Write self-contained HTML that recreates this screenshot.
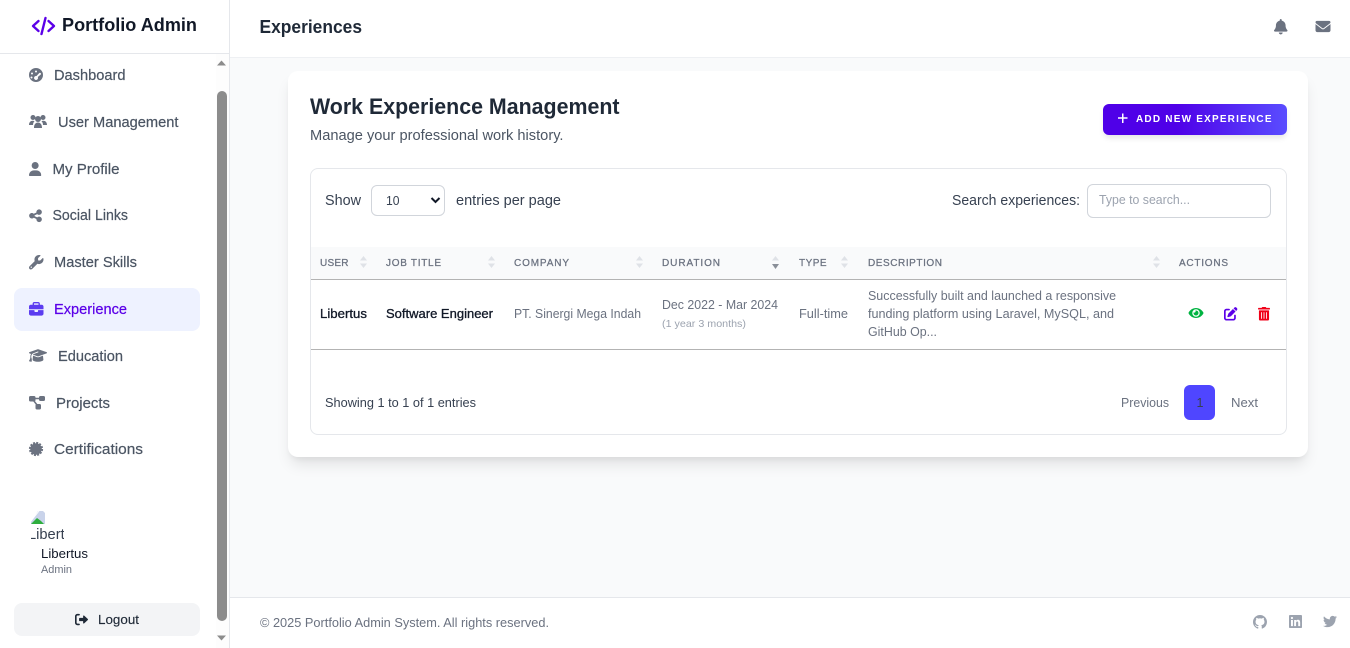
<!DOCTYPE html>
<html lang="en"><head><meta charset="utf-8"><title>Experiences</title>
<style>
html,body{margin:0;padding:0;width:1350px;height:648px;overflow:hidden;background:#f9fafb}
body{position:relative;font-family:"Liberation Sans",sans-serif}
.b{position:absolute;box-sizing:border-box}
svg.o{position:absolute;left:0;top:0}
text{font-family:"Liberation Sans",sans-serif}
.nav{font-size:14.5px;fill:#4b5563;stroke:#4b5563;stroke-width:.2}
.th{font-size:10px;fill:#6b7280;stroke:#6b7280;stroke-width:.25}
.td{font-size:12.5px;fill:#6b7280}
.gi{fill:#6b7280}
.s{fill:#dfe2e7}
</style></head><body>
<div class="b" style="left:0;top:0;width:230px;height:648px;background:#fff;border-right:1px solid #e5e7eb"></div>
<div class="b" style="left:0;top:53px;width:229px;height:1px;background:#e5e7eb"></div>
<div class="b" style="left:230px;top:0;width:1120px;height:58px;background:#fff;border-bottom:1px solid #eef0f3"></div>
<div class="b" style="left:230px;top:597px;width:1120px;height:51px;background:#fff;border-top:1px solid #e5e7eb"></div>
<div class="b" style="left:216px;top:54px;width:13px;height:594px;background:#fdfdfd"></div>
<div class="b" style="left:217px;top:91px;width:9.500px;height:530px;background:#8c8c8c;border-radius:5px"></div>
<div class="b" style="left:14px;top:288px;width:186px;height:43px;background:#eef2ff;border-radius:8px"></div>
<div class="b" style="left:14px;top:603px;width:186px;height:33px;background:#f3f4f6;border-radius:8px"></div>
<div class="b" style="left:288px;top:71px;width:1020px;height:386px;background:#fff;border-radius:10px;box-shadow:0 10px 15px -3px rgba(0,0,0,.1),0 4px 6px -2px rgba(0,0,0,.05)"></div>
<div class="b" style="left:1103px;top:104px;width:184px;height:31px;border-radius:6px;background:linear-gradient(90deg,#4f00e8 0%,#4f00e8 40%,#5a4dff 100%);box-shadow:0 4px 6px -1px rgba(0,0,0,.1)"></div>
<div class="b" style="left:310px;top:168px;width:977px;height:267px;border:1px solid #e5e7eb;border-radius:8px;background:#fff"></div>
<div class="b" style="left:371px;top:185px;width:74px;height:31px;border:1px solid #d1d5db;border-radius:6px;background:#fff"></div>
<div class="b" style="left:1087px;top:184px;width:184px;height:34px;border:1px solid #d1d5db;border-radius:6px;background:#fff"></div>
<div class="b" style="left:311px;top:247px;width:975px;height:33px;background:#f9fafb;border-bottom:1px solid #b3b3b3"></div>
<div class="b" style="left:311px;top:349px;width:975px;height:1px;background:#b3b3b3"></div>
<div class="b" style="left:1184px;top:385px;width:31px;height:35px;background:#4f46ff;border-radius:6px"></div>

<svg class="o" width="1350" height="648" viewBox="0 0 1350 648" xmlns="http://www.w3.org/2000/svg">
<!-- logo -->
<g fill="none" stroke="#5b00e8" stroke-width="2.4" stroke-linecap="round" stroke-linejoin="round"><path d="M38.500 21 33 26l5.500 5M48.500 21l5.500 5-5.500 5"/><path d="M45.500 18 41.500 34"/></g>
<text x="62" y="31" font-size="18" font-weight="700" fill="#111827" textLength="135" lengthAdjust="spacingAndGlyphs">Portfolio Admin</text>
<text x="259.500" y="33" font-size="18" font-weight="700" fill="#1f2937" textLength="102.500" lengthAdjust="spacingAndGlyphs">Experiences</text>

<!-- scroll arrows -->
<path d="M217 65.500 221.500 60.500 226 65.500z" fill="#8c8c8c"/><path d="M217 635.500 221.500 640.500 226 635.500z" fill="#8c8c8c"/>

<!-- nav icons -->
<path class="gi" fill-rule="evenodd" d="M36 68a7 7 0 1 0 0 14 7 7 0 0 0 0-14zM36 70.500a1 1 0 1 1 0 2 1 1 0 0 1 0-2zM32 72.500a1 1 0 1 1 0 2 1 1 0 0 1 0-2zM40.500 73a1 1 0 0 1 .4 1.400L37.800 77a2 2 0 1 1-1.300-1l2.800-3a1 1 0 0 1 1.200 0zM31.500 76.500a1 1 0 1 1 0 2 1 1 0 0 1 0-2z"/>
<g class="gi"><circle cx="33" cy="117.500" r="2.500"/><circle cx="43" cy="117.500" r="2.500"/><circle cx="38" cy="119" r="3"/><path d="M29 125c0-2.500 1.500-4.200 3.700-4.200.7 0 1.300.2 1.800.5-1 1-1.500 2.200-1.500 3.700H29zM47 125c0-2.500-1.500-4.200-3.700-4.200-.7 0-1.300.2-1.800.5 1 1 1.500 2.200 1.500 3.700H47zM34 128c0-3.500 1.500-5.500 4-5.500s4 2 4 5.500z"/></g>
<svg x="29" y="162" width="12.300" height="14" viewBox="0 0 448 512" class="gi"><path d="M224 256A128 128 0 1 0 224 0a128 128 0 1 0 0 256zm-45.700 48C79.800 304 0 383.800 0 482.300C0 498.700 13.300 512 29.700 512H418.300c16.400 0 29.700-13.300 29.700-29.700C448 383.800 368.200 304 269.700 304H178.300z"/></svg>
<svg x="29" y="208.500" width="13" height="14.500" viewBox="0 0 448 512" class="gi"><path d="M352 224c53 0 96-43 96-96s-43-96-96-96s-96 43-96 96c0 4 .2 8 .7 11.900l-94.100 47C145.400 170.200 121.900 160 96 160c-53 0-96 43-96 96s43 96 96 96c25.900 0 49.400-10.200 66.600-26.900l94.100 47c-.5 3.900-.7 7.800-.7 11.900c0 53 43 96 96 96s96-43 96-96s-43-96-96-96c-25.900 0-49.400 10.200-66.600 26.900l-94.100-47c.5-3.900 .7-7.800 .7-11.900s-.2-8-.7-11.900l94.100-47C302.600 213.800 326.100 224 352 224z"/></svg>
<svg x="29" y="255" width="14.500" height="14.500" viewBox="0 0 512 512" class="gi"><path d="M352 320c88.400 0 160-71.600 160-160c0-15.300-2.200-30.100-6.200-44.200c-3.100-10.800-16.400-13.200-24.300-5.300l-76.800 76.800c-3 3-7.100 4.700-11.300 4.700H336c-8.800 0-16-7.200-16-16V118.600c0-4.200 1.700-8.300 4.700-11.300l76.800-76.800c7.900-7.900 5.400-21.200-5.300-24.300C382.100 2.200 367.300 0 352 0C263.600 0 192 71.600 192 160c0 19.100 3.400 37.500 9.500 54.500L19.900 396.100C7.200 408.800 0 426.100 0 444.100C0 481.600 30.400 512 67.900 512c18 0 35.300-7.200 48-19.900L297.500 310.500c17 6.200 35.400 9.500 54.500 9.500zM80 408a24 24 0 1 1 0 48 24 24 0 1 1 0-48z"/></svg>
<svg x="29" y="302" width="14.500" height="14.500" viewBox="0 0 512 512" fill="#5b3cf0"><path d="M184 48H328c4.400 0 8 3.600 8 8V96H176V56c0-4.400 3.600-8 8-8zm-56 8V96H64C28.700 96 0 124.700 0 160v96H192 320 512V160c0-35.300-28.700-64-64-64H384V56c0-30.900-25.100-56-56-56H184c-30.900 0-56 25.100-56 56zM512 288H320v32c0 17.700-14.300 32-32 32H224c-17.700 0-32-14.300-32-32V288H0V416c0 35.300 28.700 64 64 64H448c35.300 0 64-28.700 64-64V288z"/></svg>
<svg x="29" y="348" width="18" height="15" viewBox="0 0 640 512" class="gi"><path d="M320 32c-8.100 0-16.100 1.400-23.700 4.100L15.800 137.400C6.300 140.900 0 149.900 0 160s6.300 19.100 15.800 22.600l57.900 20.900C57.300 229.300 48 259.800 48 291.900v28.100c0 28.400-10.800 57.700-22.300 80.800c-6.500 13-13.900 25.800-22.500 37.600C0 442.700-.9 448.300 .9 453.400s6 8.900 11.200 10.200l64 16c4.200 1.100 8.700 .3 12.400-2s6.300-6.100 7.100-10.400c8.600-42.800 4.300-81.200-2.100-108.700C90.300 344.300 86 329.800 80 316.500V291.900c0-30.200 10.200-58.700 27.900-81.500c12.900-15.500 29.600-28 49.200-35.700l157-61.700c8.200-3.200 17.500 .8 20.700 9s-.8 17.500-9 20.700l-157 61.700c-12.400 4.900-23.300 12.400-32.200 21.600l159.600 57.600c7.600 2.700 15.600 4.100 23.700 4.100s16.100-1.400 23.700-4.100L624.200 182.600c9.500-3.400 15.800-12.500 15.800-22.600s-6.300-19.100-15.800-22.600L343.700 36.100C336.100 33.400 328.100 32 320 32zM128 408c0 35.300 86 72 192 72s192-36.700 192-72L496.700 262.600 354.500 314c-11.100 4-22.800 6-34.500 6s-23.500-2-34.500-6L143.300 262.600 128 408z"/></svg>
<g class="gi"><rect x="29" y="396" width="6.500" height="5.500" rx="1.500"/><rect x="39" y="396" width="6" height="5" rx="1.500"/><rect x="35.500" y="404" width="5.500" height="5.500" rx="1.500"/></g>
<path d="M34 398.500h6M33.500 400.500l4 5" stroke="#6b7280" stroke-width="1.500" fill="none"/>
<circle class="gi" cx="36" cy="449" r="5.800"/>
<circle cx="36" cy="449" r="6.200" fill="none" stroke="#6b7280" stroke-width="1.800" stroke-dasharray="1.950 1.300"/>

<!-- nav text -->
<text class="nav" x="54" y="80" textLength="71.500" lengthAdjust="spacingAndGlyphs">Dashboard</text>
<text class="nav" x="58" y="127" textLength="120.500" lengthAdjust="spacingAndGlyphs">User Management</text>
<text class="nav" x="52.500" y="174" textLength="67" lengthAdjust="spacingAndGlyphs">My Profile</text>
<text class="nav" x="52.500" y="220" textLength="75.500" lengthAdjust="spacingAndGlyphs">Social Links</text>
<text class="nav" x="54" y="267" textLength="83" lengthAdjust="spacingAndGlyphs">Master Skills</text>
<text class="nav" x="54" y="314" textLength="73" lengthAdjust="spacingAndGlyphs" style="fill:#5b00e8;stroke:#5b00e8">Experience</text>
<text class="nav" x="58" y="361" textLength="65" lengthAdjust="spacingAndGlyphs">Education</text>
<text class="nav" x="56" y="408" textLength="54" lengthAdjust="spacingAndGlyphs">Projects</text>
<text class="nav" x="54" y="454" textLength="89" lengthAdjust="spacingAndGlyphs">Certifications</text>

<!-- avatar broken image -->
<path d="M38 511h5l2 2v11H31v-2z" fill="#c9d3ea"/><path d="M31 524l6-6 4 3 3 3z" fill="#2eae3e"/><path d="M31 521l8-10" stroke="#fff" stroke-width="1"/>
<svg x="31" y="524" width="33" height="19" viewBox="0 0 33 19"><text x="-3" y="15" font-size="14.500" fill="#374151" textLength="44" lengthAdjust="spacingAndGlyphs">Liberty</text></svg>
<text x="41" y="558" font-size="13" fill="#111827" textLength="47" lengthAdjust="spacingAndGlyphs">Libertus</text>
<text x="41" y="573" font-size="11" fill="#6b7280" textLength="31" lengthAdjust="spacingAndGlyphs">Admin</text>

<svg x="75" y="613" width="13" height="13" viewBox="0 0 512 512" fill="#1f2937"><path d="M160 96c17.700 0 32-14.300 32-32s-14.300-32-32-32H96C43 32 0 75 0 128V384c0 53 43 96 96 96h64c17.700 0 32-14.300 32-32s-14.300-32-32-32H96c-17.700 0-32-14.300-32-32l0-256c0-17.700 14.300-32 32-32h64zM504.500 273.400c4.800-4.500 7.500-10.800 7.500-17.400s-2.700-12.900-7.500-17.400l-144-136c-7-6.600-17.200-8.400-26-4.600s-14.500 12.500-14.500 22v72H192c-17.700 0-32 14.300-32 32l0 64c0 17.700 14.300 32 32 32H320v72c0 9.600 5.700 18.200 14.500 22s19 2 26-4.600l144-136z"/></svg>
<text x="98" y="624" font-size="13" fill="#1f2937" stroke="#1f2937" stroke-width=".15" textLength="41" lengthAdjust="spacingAndGlyphs">Logout</text>

<!-- header icons -->
<svg x="1274" y="19" width="13.500" height="15.500" viewBox="0 0 448 512" class="gi"><path d="M224 0c-17.700 0-32 14.300-32 32V51.200C119 66 64 130.600 64 208v18.800c0 47-17.300 92.400-48.500 127.600l-7.400 8.300c-8.400 9.400-10.400 22.900-5.300 34.400S19.400 416 32 416H416c12.600 0 24-7.400 29.200-18.900s3.100-25-5.300-34.400l-7.400-8.300C401.300 319.200 384 273.900 384 226.800V208c0-77.400-55-142-128-156.800V32c0-17.700-14.300-32-32-32zm45.300 493.300c12-12 18.700-28.300 18.700-45.300H224 160c0 17 6.700 33.300 18.700 45.300s28.300 18.700 45.300 18.700s33.300-6.700 45.300-18.700z"/></svg>
<svg x="1315.500" y="19" width="15" height="15" viewBox="0 0 512 512" class="gi"><path d="M48 64C21.500 64 0 85.500 0 112c0 15.100 7.100 29.300 19.200 38.400L236.800 313.600c11.400 8.500 27 8.500 38.400 0L492.800 150.400c12.100-9.100 19.200-23.300 19.200-38.400c0-26.500-21.500-48-48-48H48zM0 176V384c0 35.300 28.700 64 64 64H448c35.300 0 64-28.700 64-64V176L294.400 339.200c-22.800 17.100-54 17.100-76.800 0L0 176z"/></svg>

<!-- card head -->
<text x="310" y="114" font-size="22" font-weight="700" fill="#1f2937" textLength="309.500" lengthAdjust="spacingAndGlyphs">Work Experience Management</text>
<text x="310" y="140" font-size="14.500" fill="#4b5563" textLength="253.500" lengthAdjust="spacingAndGlyphs">Manage your professional work history.</text>
<path d="M1118 118h9.500M1122.750 113.500v9.500" stroke="#fff" stroke-width="1.500" fill="none"/>
<text x="1136" y="122" font-size="10" font-weight="700" fill="#fff" textLength="135.500">ADD NEW EXPERIENCE</text>

<!-- controls -->
<text x="325" y="205" font-size="14.500" fill="#374151" textLength="36" lengthAdjust="spacingAndGlyphs">Show</text>
<text x="386" y="205" font-size="12.500" fill="#374151" textLength="13.500" lengthAdjust="spacingAndGlyphs">10</text>
<path d="M431.500 198l4 4 4-4" stroke="#111827" stroke-width="2" fill="none"/>
<text x="456" y="205" font-size="14.500" fill="#374151" textLength="105" lengthAdjust="spacingAndGlyphs">entries per page</text>
<text x="952" y="205" font-size="14.500" fill="#374151" textLength="128" lengthAdjust="spacingAndGlyphs">Search experiences:</text>
<text x="1099" y="204" font-size="12.500" fill="#9ca3af" textLength="91" lengthAdjust="spacingAndGlyphs">Type to search...</text>

<!-- table head -->
<text class="th" x="320" y="266" textLength="28.500">USER</text>
<text class="th" x="386" y="266" textLength="55">JOB TITLE</text>
<text class="th" x="514" y="266" textLength="55">COMPANY</text>
<text class="th" x="662" y="266" textLength="58">DURATION</text>
<text class="th" x="799" y="266" textLength="27.500">TYPE</text>
<text class="th" x="868" y="266" textLength="74">DESCRIPTION</text>
<text class="th" x="1179" y="266" textLength="49">ACTIONS</text>
<g class="s">
<path d="M360 260.500l3.500-4.500 3.500 4.500zM360 263.500l3.500 4.500 3.500-4.500z"/>
<path d="M488 260.500l3.500-4.500 3.500 4.500zM488 263.500l3.500 4.500 3.500-4.500z"/>
<path d="M636 260.500l3.500-4.500 3.500 4.500zM636 263.500l3.500 4.500 3.500-4.500z"/>
<path d="M772 260.500l3.500-4.500 3.500 4.500z"/>
<path d="M841 260.500l3.500-4.500 3.500 4.500zM841 263.500l3.500 4.500 3.500-4.500z"/>
<path d="M1153 260.500l3.500-4.500 3.500 4.500zM1153 263.500l3.500 4.500 3.500-4.500z"/>
</g>
<path d="M772 264l3.500 5 3.500-5z" fill="#8a8f98"/>

<!-- row -->
<text x="320" y="318" font-size="12.500" fill="#111827" stroke="#111827" stroke-width=".3" textLength="47" lengthAdjust="spacingAndGlyphs">Libertus</text>
<text x="386" y="318" font-size="12.500" fill="#111827" stroke="#111827" stroke-width=".3" textLength="107" lengthAdjust="spacingAndGlyphs">Software Engineer</text>
<text class="td" x="514" y="318" textLength="127" lengthAdjust="spacingAndGlyphs">PT. Sinergi Mega Indah</text>
<text class="td" x="662" y="309" textLength="116" lengthAdjust="spacingAndGlyphs">Dec 2022 - Mar 2024</text>
<text x="662" y="327" font-size="10.500" fill="#9ca3af" textLength="84" lengthAdjust="spacingAndGlyphs">(1 year 3 months)</text>
<text class="td" x="799" y="318" textLength="49" lengthAdjust="spacingAndGlyphs">Full-time</text>
<text class="td" x="868" y="300" textLength="248" lengthAdjust="spacingAndGlyphs">Successfully built and launched a responsive</text>
<text class="td" x="868" y="318" textLength="246" lengthAdjust="spacingAndGlyphs">funding platform using Laravel, MySQL, and</text>
<text class="td" x="868" y="336" textLength="69" lengthAdjust="spacingAndGlyphs">GitHub Op...</text>

<svg x="1188.500" y="305.500" width="15" height="15" viewBox="0 0 576 512" fill="#00b341"><path d="M572.520 241.400C518.290 135.590 410.930 64 288 64S57.680 135.640 3.480 241.410a32.350 32.350 0 0 0 0 29.190C57.710 376.410 165.070 448 288 448s230.320-71.640 284.520-177.410a32.350 32.350 0 0 0 0-29.190zM288 400a144 144 0 1 1 144-144 143.930 143.930 0 0 1-144 144zm0-240a95.310 95.310 0 0 0-25.310 3.790 47.850 47.850 0 0 1-66.900 66.900A95.780 95.780 0 1 0 288 160z"/></svg>
<svg x="1224" y="307" width="13.500" height="13.500" viewBox="0 0 512 512" fill="#5b00e8"><path d="M471.600 21.700c-21.900-21.900-57.300-21.900-79.200 0L362.300 51.700l97.900 97.900 30.100-30.100c21.900-21.900 21.900-57.300 0-79.200L471.600 21.700zm-299.200 220c-6.100 6.100-10.800 13.600-13.500 21.900l-29.600 88.800c-2.900 8.600-.6 18.100 5.800 24.600s15.900 8.700 24.600 5.800l88.800-29.600c8.200-2.700 15.700-7.400 21.900-13.500L437.700 172.300 339.700 74.300 172.400 241.700zM96 64C43 64 0 107 0 160V416c0 53 43 96 96 96H352c53 0 96-43 96-96V320c0-17.700-14.300-32-32-32s-32 14.300-32 32v96c0 17.700-14.300 32-32 32H96c-17.700 0-32-14.300-32-32V160c0-17.700 14.300-32 32-32h96c17.700 0 32-14.300 32-32s-14.300-32-32-32H96z"/></svg>
<svg x="1258" y="307" width="12" height="13.500" viewBox="0 0 448 512" fill="#f00018"><path d="M32 464a48 48 0 0 0 48 48h288a48 48 0 0 0 48-48V128H32zm272-256a16 16 0 0 1 32 0v224a16 16 0 0 1-32 0zm-96 0a16 16 0 0 1 32 0v224a16 16 0 0 1-32 0zm-96 0a16 16 0 0 1 32 0v224a16 16 0 0 1-32 0zM432 32H312l-9.400-18.700A24 24 0 0 0 281.100 0H166.800a23.720 23.720 0 0 0-21.400 13.300L136 32H16A16 16 0 0 0 0 48v32a16 16 0 0 0 16 16h416a16 16 0 0 0 16-16V48a16 16 0 0 0-16-16z"/></svg>

<!-- pagination -->
<text x="325" y="407" font-size="12.500" fill="#374151" textLength="151" lengthAdjust="spacingAndGlyphs">Showing 1 to 1 of 1 entries</text>
<text class="td" x="1121" y="407" textLength="48" lengthAdjust="spacingAndGlyphs">Previous</text>
<text x="1196.500" y="407" font-size="12.500" fill="#374151" textLength="7">1</text>
<text class="td" x="1231" y="407" textLength="27" lengthAdjust="spacingAndGlyphs">Next</text>

<!-- footer -->
<text x="260" y="627" font-size="12.500" fill="#6b7280" textLength="289" lengthAdjust="spacingAndGlyphs">© 2025 Portfolio Admin System. All rights reserved.</text>
<svg x="1253" y="615" width="14" height="14" viewBox="0 0 16 16" fill="#9ca3af"><path d="M8 0C3.580 0 0 3.580 0 8c0 3.540 2.290 6.530 5.470 7.590.4.070.55-.17.55-.38 0-.19-.01-.82-.01-1.490-2.010.37-2.530-.49-2.690-.94-.09-.23-.48-.94-.82-1.130-.28-.15-.68-.52-.01-.53.63-.01 1.080.58 1.230.82.720 1.210 1.870.87 2.330.66.070-.52.28-.87.51-1.070-1.780-.2-3.640-.89-3.640-3.950 0-.87.31-1.590.82-2.150-.08-.2-.36-1.020.08-2.120 0 0 .67-.21 2.200.82.64-.18 1.320-.27 2-.27s1.360.09 2 .27c1.530-1.040 2.200-.82 2.200-.82.44 1.100.16 1.920.08 2.120.51.56.82 1.270.82 2.150 0 3.070-1.870 3.750-3.650 3.950.29.25.54.73.54 1.480 0 1.070-.01 1.930-.01 2.200 0 .21.15.46.55.38A8.010 8.010 0 0 0 16 8c0-4.420-3.580-8-8-8z"/></svg>
<svg x="1289" y="614" width="13" height="15" viewBox="0 0 448 512" fill="#9ca3af"><path d="M416 32H31.900C14.300 32 0 46.500 0 64.300v383.400C0 465.500 14.300 480 31.900 480H416c17.600 0 32-14.500 32-32.300V64.300c0-17.800-14.400-32.300-32-32.300zM135.400 416H69V202.200h66.500V416zm-33.200-243c-21.300 0-38.500-17.300-38.500-38.500S80.900 96 102.200 96c21.200 0 38.500 17.300 38.500 38.500 0 21.300-17.200 38.500-38.500 38.500zm282.100 243h-66.400V312c0-24.800-.5-56.700-34.500-56.700-34.600 0-39.900 27-39.900 54.900V416h-66.400V202.200h63.700v29.200h.9c8.900-16.800 30.600-34.500 62.900-34.500 67.200 0 79.700 44.300 79.700 101.900V416z"/></svg>
<svg x="1323" y="614" width="14" height="15" viewBox="0 0 512 512" fill="#9ca3af"><path d="M459.370 151.716c.325 4.548.325 9.097.325 13.645 0 138.720-105.583 298.558-298.558 298.558-59.452 0-114.680-17.219-161.137-47.106 8.447.974 16.568 1.299 25.340 1.299 49.055 0 94.213-16.568 130.274-44.832-46.132-.975-84.792-31.188-98.112-72.772 6.498.974 12.995 1.624 19.818 1.624 9.421 0 18.843-1.300 27.614-3.573-48.081-9.747-84.143-51.980-84.143-102.985v-1.299c13.969 7.797 30.214 12.670 47.431 13.319-28.264-18.843-46.781-51.005-46.781-87.391 0-19.492 5.197-37.360 14.294-52.954 51.655 63.675 129.300 105.258 216.365 109.807-1.624-7.797-2.599-15.918-2.599-24.040 0-57.828 46.782-104.934 104.934-104.934 30.213 0 57.502 12.670 76.670 33.137 23.715-4.548 46.456-13.320 66.599-25.340-7.798 24.366-24.366 44.833-46.132 57.827 21.117-2.273 41.584-8.122 60.426-16.243-14.292 20.791-32.161 39.308-52.628 54.253z"/></svg>
</svg>
</body></html>
